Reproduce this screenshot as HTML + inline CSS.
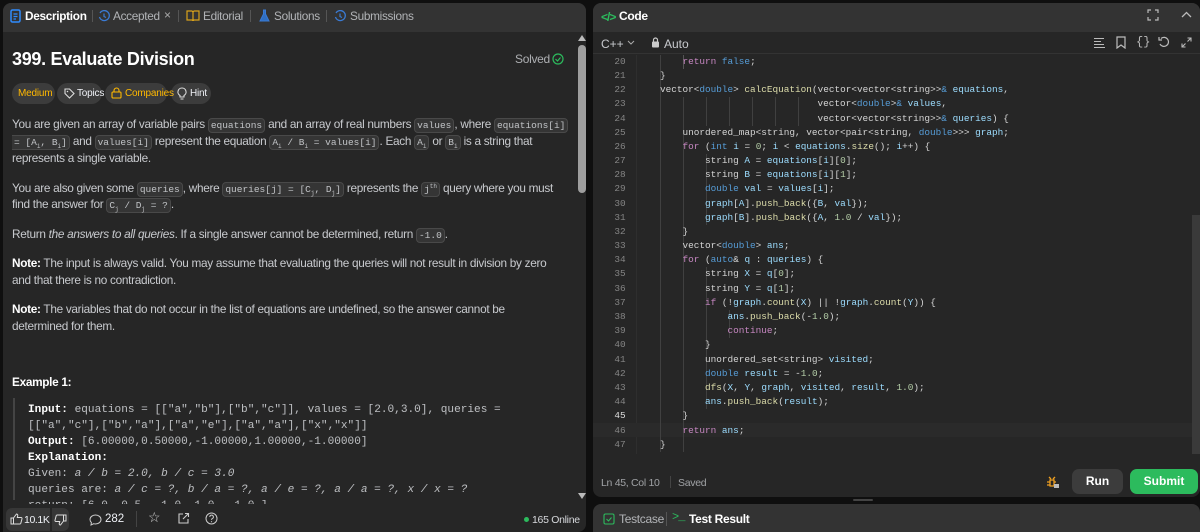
<!DOCTYPE html>
<html style="width:1200px;height:532px;overflow:hidden"><head><meta charset="utf-8">
<style>
*{margin:0;padding:0;box-sizing:border-box}
body{width:1200px;height:532px;background:#0f0f0f;font-family:"Liberation Sans",sans-serif;color:#eff1f6;overflow:hidden;position:relative}
.abs{position:absolute;white-space:nowrap}
.panel{position:absolute;background:#262626;border-radius:8px;overflow:hidden}
.hdr{position:absolute;left:0;right:0;top:0;height:29px;background:#333}
.t{font-size:11.8px;color:#eff1f6cc;letter-spacing:-0.3px}
.t b{color:#fff}
code{font-family:"Liberation Mono",monospace;font-size:9.5px;letter-spacing:0;background:#ffffff12;border:1px solid #ffffff1a;border-radius:4px;padding:1px 2px;color:#eff1f6bf}
.pre{font-family:"Liberation Mono",monospace;font-size:11.1px;color:#eff1f6bf}
.pre b{color:#fff}
.cl{position:absolute;left:0;font-family:"Liberation Mono",monospace;font-size:9.4px;color:#d4d4d4;white-space:pre;height:14px;line-height:14px}
.ln{position:absolute;left:598px;width:44px;text-align:center;font-family:"Liberation Mono",monospace;font-size:9.4px;color:#858585;height:14px;line-height:14px}
.k{color:#569cd6}.p{color:#c586c0}.v{color:#9cdcfe}.n{color:#b5cea8}.f{color:#dcdcaa}
.pill{position:absolute;top:83px;height:21px;border-radius:11px;background:#ffffff1a;font-size:10px;line-height:21px;letter-spacing:-0.2px;white-space:nowrap}
.g{position:absolute;width:1px;background:#404040}
.tab{position:absolute;top:9px;font-size:11.8px;letter-spacing:-0.3px;color:#eff1f6aa;white-space:nowrap}
</style></head><body>

<div class="panel" style="left:3px;top:3px;width:583px;height:529px">
 <div class="hdr"></div>
</div>
<svg class="abs" style="left:10px;top:9px" width="12" height="14" viewBox="0 0 12 14"><rect x="1" y="1" width="9" height="12" rx="1.5" fill="none" stroke="#2f8cff" stroke-width="1.5"/><path d="M3.5 5h4M3.5 7.5h4M3.5 10h2.5" stroke="#2f8cff" stroke-width="1.2"/></svg>
<div class="tab" style="left:25px;font-weight:bold;color:#fff">Description</div>
<div class="abs" style="left:92px;top:10px;width:1px;height:12px;background:#555"></div>
<svg class="abs" style="left:85px;top:10px;display:none" width="1" height="1"></svg>
<svg class="abs" style="left:98px;top:10px" width="12" height="12" viewBox="0 0 12 12"><path d="M2 3A5 5 0 1 1 1.5 7" fill="none" stroke="#3a7bd5" stroke-width="1.3"/><path d="M6 3.5v3l2 1" stroke="#3a7bd5" stroke-width="1.2" fill="none"/></svg>
<div class="tab" style="left:113px">Accepted</div>
<div class="abs" style="left:164px;top:8px;font-size:12px;color:#aaa">×</div>
<div class="abs" style="left:178px;top:10px;width:1px;height:12px;background:#555"></div>
<svg class="abs" style="left:186px;top:10px" width="14" height="11" viewBox="0 0 14 11"><path d="M1 1h5l1 1 1-1h5v9H8l-1 1-1-1H1z M7 2v8" fill="none" stroke="#d9a21b" stroke-width="1.2"/></svg>
<div class="tab" style="left:203px">Editorial</div>
<div class="abs" style="left:250px;top:10px;width:1px;height:12px;background:#555"></div>
<svg class="abs" style="left:259px;top:9px" width="11" height="13" viewBox="0 0 11 13"><path d="M4 1h3M4.5 1v4L1 12h9L6.5 5V1" fill="#2f6fc4" stroke="#3a7bd5" stroke-width="1"/></svg>
<div class="tab" style="left:274px">Solutions</div>
<div class="abs" style="left:326px;top:10px;width:1px;height:12px;background:#555"></div>
<svg class="abs" style="left:334px;top:10px" width="12" height="12" viewBox="0 0 12 12"><path d="M2 3A5 5 0 1 1 1.5 7" fill="none" stroke="#3a7bd5" stroke-width="1.3"/><path d="M6 3.5v3l2 1" stroke="#3a7bd5" stroke-width="1.2" fill="none"/></svg>
<div class="tab" style="left:350px">Submissions</div>

<div class="abs" style="left:12px;top:49px;font-size:18px;font-weight:bold;color:#fff;letter-spacing:-0.3px">399. Evaluate Division</div>
<div class="abs" style="left:515px;top:52px;font-size:12px;letter-spacing:-0.3px;color:#eff1f6aa">Solved</div>
<svg class="abs" style="left:552px;top:53px" width="12" height="12" viewBox="0 0 12 12"><circle cx="6" cy="6" r="5" fill="none" stroke="#2cbb5d" stroke-width="1.2"/><path d="M3.5 6l2 2 3-3.5" fill="none" stroke="#2cbb5d" stroke-width="1.2"/></svg>

<div class="pill" style="left:12px;width:43px;padding-left:6px;color:#ffb800">Medium</div>
<div class="pill" style="left:57px;width:45px;padding-left:20px;color:#eff1f6">Topics</div>
<svg class="abs" style="left:64px;top:88px" width="11" height="11" viewBox="0 0 11 11"><path d="M1 1h4.5l4.5 4.5-4.5 4.5L1 5.5z" fill="none" stroke="#ddd" stroke-width="1.1"/><circle cx="3.5" cy="3.5" r=".8" fill="#ddd"/></svg>
<div class="pill" style="left:105px;width:62px;padding-left:20px;color:#ffb800">Companies</div>
<svg class="abs" style="left:111px;top:87px" width="11" height="12" viewBox="0 0 11 12"><rect x="1" y="5" width="9" height="6" rx="1" fill="none" stroke="#ffb800" stroke-width="1.1"/><path d="M3 5V3.5a2.5 2.5 0 0 1 5 0V5" fill="none" stroke="#ffb800" stroke-width="1.1"/></svg>
<div class="pill" style="left:171px;width:40px;padding-left:19px">Hint</div>
<svg class="abs" style="left:177px;top:87px" width="10" height="13" viewBox="0 0 10 13"><path d="M5 1a4 4 0 0 0-2 7.5V10h4V8.5A4 4 0 0 0 5 1zM3.5 12h3" fill="none" stroke="#ddd" stroke-width="1.1"/></svg>

<div class="abs t" style="left:12px;top:117px">You are given an array of variable pairs <code>equations</code> and an array of real numbers <code>values</code>, where <code>equations[i]</code></div>
<div class="abs t" style="left:12px;top:134px"><code style="border-left:none;border-radius:0 4px 4px 0">= [A<sub style="font-size:6px">i</sub>, B<sub style="font-size:6px">i</sub>]</code> and <code>values[i]</code> represent the equation <code>A<sub style="font-size:6px">i</sub> / B<sub style="font-size:6px">i</sub> = values[i]</code>. Each <code>A<sub style="font-size:6px">i</sub></code> or <code>B<sub style="font-size:6px">i</sub></code> is a string that</div>
<div class="abs t" style="left:12px;top:151px">represents a single variable.</div>

<div class="abs t" style="left:12px;top:181px">You are also given some <code>queries</code>, where <code>queries[j] = [C<sub style="font-size:6px">j</sub>, D<sub style="font-size:6px">j</sub>]</code> represents the <code>j<sup style="font-size:6px">th</sup></code> query where you must</div>
<div class="abs t" style="left:12px;top:197px">find the answer for <code>C<sub style="font-size:6px">j</sub> / D<sub style="font-size:6px">j</sub> = ?</code>.</div>

<div class="abs t" style="left:12px;top:227px">Return <i>the answers to all queries</i>. If a single answer cannot be determined, return <code>-1.0</code>.</div>

<div class="abs t" style="left:12px;top:256px"><b>Note:</b> The input is always valid. You may assume that evaluating the queries will not result in division by zero</div>
<div class="abs t" style="left:12px;top:273px">and that there is no contradiction.</div>

<div class="abs t" style="left:12px;top:302px"><b>Note:</b> The variables that do not occur in the list of equations are undefined, so the answer cannot be</div>
<div class="abs t" style="left:12px;top:319px">determined for them.</div>

<div class="abs t" style="left:12px;top:375px"><b>Example 1:</b></div>
<div class="abs" style="left:13px;top:398px;width:2px;height:102px;background:#ffffff24"></div>
<div class="abs pre" style="left:28px;top:404px"><b>Input:</b> equations = [["a","b"],["b","c"]], values = [2.0,3.0], queries =</div>
<div class="abs pre" style="left:28px;top:420px">[["a","c"],["b","a"],["a","e"],["a","a"],["x","x"]]</div>
<div class="abs pre" style="left:28px;top:436px"><b>Output:</b> [6.00000,0.50000,-1.00000,1.00000,-1.00000]</div>
<div class="abs pre" style="left:28px;top:452px"><b>Explanation:</b></div>
<div class="abs pre" style="left:28px;top:468px">Given: <i>a / b = 2.0, b / c = 3.0</i></div>
<div class="abs pre" style="left:28px;top:484px">queries are: <i>a / c = ?, b / a = ?, a / e = ?, a / a = ?, x / x = ?</i></div>
<div class="abs pre" style="left:28px;top:500px;height:4px;overflow:hidden">return: [6.0, 0.5, -1.0, 1.0, -1.0 ]</div>

<div class="abs" style="left:578px;top:35px;width:0;height:0;border-left:4px solid transparent;border-right:4px solid transparent;border-bottom:6px solid #bbb"></div>
<div class="abs" style="left:578px;top:45px;width:8px;height:148px;background:#9e9e9e;border-radius:4px"></div>
<div class="abs" style="left:578px;top:493px;width:0;height:0;border-left:4px solid transparent;border-right:4px solid transparent;border-top:6px solid #bbb"></div>

<div class="abs" style="left:3px;top:504px;width:575px;height:28px;background:#262626"></div>
<div class="abs" style="left:6px;top:508px;width:63px;height:23px;background:#ffffff14;border-radius:6px"></div>
<div class="abs" style="left:50px;top:508px;width:2px;height:23px;background:#262626"></div>
<svg class="abs" style="left:10px;top:513px" width="13" height="12" viewBox="0 0 13 12"><path d="M1 5h2.5v6H1zM3.5 5l3-4c1 0 1.5.8 1.2 2L7.3 4.5H11c.8 0 1.2.6 1 1.3l-1.2 4.5c-.2.5-.6.7-1 .7H3.5" fill="none" stroke="#ddd" stroke-width="1"/></svg>
<div class="abs" style="left:24px;top:514px;font-size:10.5px;letter-spacing:-0.4px;color:#eff1f6">10.1K</div>
<svg class="abs" style="left:54px;top:514px" width="13" height="12" viewBox="0 0 13 12"><g transform="rotate(180 6.5 6)"><path d="M1 5h2.5v6H1zM3.5 5l3-4c1 0 1.5.8 1.2 2L7.3 4.5H11c.8 0 1.2.6 1 1.3l-1.2 4.5c-.2.5-.6.7-1 .7H3.5" fill="none" stroke="#ddd" stroke-width="1"/></g></svg>
<svg class="abs" style="left:89px;top:514px" width="13" height="12" viewBox="0 0 13 12"><path d="M6.5 1C3.5 1 1 3 1 5.5c0 1.2.5 2.2 1.4 3L2 11l2.8-1.3c.5.2 1.1.3 1.7.3C9.5 10 12 8 12 5.5S9.5 1 6.5 1z" fill="none" stroke="#ccc" stroke-width="1"/></svg>
<div class="abs" style="left:105px;top:513px;font-size:11.5px;color:#eff1f6">282</div>
<div class="abs" style="left:136px;top:511px;width:1px;height:16px;background:#444"></div>
<div class="abs" style="left:148px;top:509px;font-size:14px;color:#ccc">☆</div>
<svg class="abs" style="left:177px;top:512px" width="13" height="13" viewBox="0 0 13 13"><path d="M6 2H2v9h9V7M8 1.5h3.5V5M11.5 1.5L6 7" fill="none" stroke="#ccc" stroke-width="1.1"/></svg>
<svg class="abs" style="left:205px;top:512px" width="13" height="13" viewBox="0 0 13 13"><circle cx="6.5" cy="6.5" r="5.5" fill="none" stroke="#ccc" stroke-width="1"/><path d="M4.8 5a1.8 1.8 0 1 1 2.5 1.6c-.6.3-.8.6-.8 1.3" fill="none" stroke="#ccc" stroke-width="1"/><circle cx="6.5" cy="9.7" r=".6" fill="#ccc"/></svg>
<div class="abs" style="left:524px;top:517px;width:5px;height:5px;border-radius:50%;background:#2cbb5d"></div>
<div class="abs" style="left:532px;top:514px;font-size:10.5px;letter-spacing:-0.3px;color:#eff1f6dd">165 Online</div>

<div class="panel" style="left:593px;top:3px;width:607px;height:494px">
 <div class="hdr"></div>
 <div class="abs" style="left:0;right:0;top:29px;height:22px;background:#262626;border-bottom:1px solid #333"></div>
</div>
<div class="abs" style="left:601px;top:10px;font-size:12px;color:#2cbb5d;font-weight:bold;letter-spacing:-1px">&lt;/&gt;</div>
<div class="abs" style="left:619px;top:9px;font-size:12px;color:#fff;font-weight:bold;letter-spacing:-0.3px">Code</div>
<svg class="abs" style="left:1147px;top:9px" width="12" height="12" viewBox="0 0 12 12"><path d="M1 4V1h3M8 1h3v3M11 8v3H8M4 11H1V8" fill="none" stroke="#bbb" stroke-width="1.2"/></svg>
<svg class="abs" style="left:1181px;top:11px" width="11" height="7" viewBox="0 0 11 7"><path d="M1 6l4.5-4.5L10 6" fill="none" stroke="#bbb" stroke-width="1.3"/></svg>

<div class="abs" style="left:601px;top:37px;font-size:12px;color:#eff1f6cc">C++</div>
<svg class="abs" style="left:627px;top:40px" width="8" height="6" viewBox="0 0 8 6"><path d="M1 1l3 3 3-3" fill="none" stroke="#aaa" stroke-width="1"/></svg>
<svg class="abs" style="left:651px;top:37px" width="9" height="11" viewBox="0 0 9 11"><rect x="1" y="4.5" width="7" height="6" rx="1" fill="#ccc"/><path d="M2.5 4.5V3a2 2 0 0 1 4 0v1.5" fill="none" stroke="#ccc" stroke-width="1.2"/></svg>
<div class="abs" style="left:664px;top:37px;font-size:12px;color:#eff1f6cc">Auto</div>
<svg class="abs" style="left:1093px;top:37px" width="13" height="12" viewBox="0 0 13 12"><path d="M1 1.5h10M1 4.5h7M1 7.5h10M1 10.5h11" stroke="#bbb" stroke-width="1.1"/></svg>
<svg class="abs" style="left:1116px;top:36px" width="10" height="13" viewBox="0 0 10 13"><path d="M1 1h8v11L5 9l-4 3z" fill="none" stroke="#bbb" stroke-width="1.2"/></svg>
<div class="abs" style="left:1136px;top:35px;font-size:12px;color:#bbb;font-family:'Liberation Mono',monospace">{}</div>
<svg class="abs" style="left:1158px;top:36px" width="12" height="12" viewBox="0 0 12 12"><path d="M3 2.5A4.5 4.5 0 1 1 2 8" fill="none" stroke="#bbb" stroke-width="1.2"/><path d="M1 1v3h3" fill="none" stroke="#bbb" stroke-width="1.2"/></svg>
<svg class="abs" style="left:1181px;top:37px" width="11" height="11" viewBox="0 0 11 11"><path d="M6.5 1H10v3.5M10 1L6.5 4.5M4.5 10H1V6.5M1 10l3.5-3.5" fill="none" stroke="#bbb" stroke-width="1.1"/></svg>

<div class="abs" style="left:636px;top:55px;width:1px;height:400px;background:#2e2e2e"></div>
<div class="abs" style="left:593px;top:423px;width:600px;height:14px;background:#2a2a2a"></div>
<div class="abs" style="left:1192px;top:215px;width:8px;height:240px;background:#3a3a3a"></div>

<div class="ln" style="top:55px">20</div><div class="ln" style="top:69px">21</div><div class="ln" style="top:83px">22</div><div class="ln" style="top:97px">23</div><div class="ln" style="top:112px">24</div><div class="ln" style="top:126px">25</div><div class="ln" style="top:140px">26</div><div class="ln" style="top:154px">27</div><div class="ln" style="top:168px">28</div><div class="ln" style="top:182px">29</div><div class="ln" style="top:197px">30</div><div class="ln" style="top:211px">31</div><div class="ln" style="top:225px">32</div><div class="ln" style="top:239px">33</div><div class="ln" style="top:253px">34</div><div class="ln" style="top:267px">35</div><div class="ln" style="top:282px">36</div><div class="ln" style="top:296px">37</div><div class="ln" style="top:310px">38</div><div class="ln" style="top:324px">39</div><div class="ln" style="top:338px">40</div><div class="ln" style="top:353px">41</div><div class="ln" style="top:367px">42</div><div class="ln" style="top:381px">43</div><div class="ln" style="top:395px">44</div><div class="ln" style="top:409px;color:#ddd">45</div><div class="ln" style="top:424px">46</div><div class="ln" style="top:438px">47</div>

<div class="g" style="left:660px;top:55px;height:397px"></div>
<div class="g" style="left:683px;top:55px;height:14px;background:#555"></div>
<div class="g" style="left:683px;top:97px;height:29px"></div>
<div class="g" style="left:706px;top:97px;height:29px"></div>
<div class="g" style="left:729px;top:97px;height:29px"></div>
<div class="g" style="left:752px;top:97px;height:29px"></div>
<div class="g" style="left:775px;top:97px;height:29px"></div>
<div class="g" style="left:798px;top:97px;height:29px"></div>
<div class="g" style="left:683px;top:126px;height:326px"></div>
<div class="g" style="left:706px;top:154px;height:71px"></div>
<div class="g" style="left:706px;top:267px;height:142px"></div>
<div class="g" style="left:729px;top:310px;height:28px"></div>

<div style="position:absolute;left:660px;top:0">
<div class="cl" style="top:55px">    <span class="p">return</span> <span class="k">false</span>;</div>
<div class="cl" style="top:69px">}</div>
<div class="cl" style="top:83px">vector&lt;<span class="k">double</span>&gt; <span class="f">calcEquation</span>(vector&lt;vector&lt;string&gt;&gt;<span class="k">&amp;</span> <span class="v">equations</span>,</div>
<div class="cl" style="top:97px">                            vector&lt;<span class="k">double</span>&gt;<span class="k">&amp;</span> <span class="v">values</span>,</div>
<div class="cl" style="top:112px">                            vector&lt;vector&lt;string&gt;&gt;<span class="k">&amp;</span> <span class="v">queries</span>) {</div>
<div class="cl" style="top:126px">    unordered_map&lt;string, vector&lt;pair&lt;string, <span class="k">double</span>&gt;&gt;&gt; <span class="v">graph</span>;</div>
<div class="cl" style="top:140px">    <span class="p">for</span> (<span class="k">int</span> <span class="v">i</span> = <span class="n">0</span>; <span class="v">i</span> &lt; <span class="v">equations</span>.<span class="f">size</span>(); <span class="v">i</span>++) {</div>
<div class="cl" style="top:154px">        string <span class="v">A</span> = <span class="v">equations</span>[<span class="v">i</span>][<span class="n">0</span>];</div>
<div class="cl" style="top:168px">        string <span class="v">B</span> = <span class="v">equations</span>[<span class="v">i</span>][<span class="n">1</span>];</div>
<div class="cl" style="top:182px">        <span class="k">double</span> <span class="v">val</span> = <span class="v">values</span>[<span class="v">i</span>];</div>
<div class="cl" style="top:197px">        <span class="v">graph</span>[<span class="v">A</span>].<span class="f">push_back</span>({<span class="v">B</span>, <span class="v">val</span>});</div>
<div class="cl" style="top:211px">        <span class="v">graph</span>[<span class="v">B</span>].<span class="f">push_back</span>({<span class="v">A</span>, <span class="n">1.0</span> / <span class="v">val</span>});</div>
<div class="cl" style="top:225px">    }</div>
<div class="cl" style="top:239px">    vector&lt;<span class="k">double</span>&gt; <span class="v">ans</span>;</div>
<div class="cl" style="top:253px">    <span class="p">for</span> (<span class="k">auto</span>&amp; <span class="v">q</span> : <span class="v">queries</span>) {</div>
<div class="cl" style="top:267px">        string <span class="v">X</span> = <span class="v">q</span>[<span class="n">0</span>];</div>
<div class="cl" style="top:282px">        string <span class="v">Y</span> = <span class="v">q</span>[<span class="n">1</span>];</div>
<div class="cl" style="top:296px">        <span class="p">if</span> (!<span class="v">graph</span>.<span class="f">count</span>(<span class="v">X</span>) || !<span class="v">graph</span>.<span class="f">count</span>(<span class="v">Y</span>)) {</div>
<div class="cl" style="top:310px">            <span class="v">ans</span>.<span class="f">push_back</span>(-<span class="n">1.0</span>);</div>
<div class="cl" style="top:324px">            <span class="p">continue</span>;</div>
<div class="cl" style="top:338px">        }</div>
<div class="cl" style="top:353px">        unordered_set&lt;string&gt; <span class="v">visited</span>;</div>
<div class="cl" style="top:367px">        <span class="k">double</span> <span class="v">result</span> = -<span class="n">1.0</span>;</div>
<div class="cl" style="top:381px">        <span class="f">dfs</span>(<span class="v">X</span>, <span class="v">Y</span>, <span class="v">graph</span>, <span class="v">visited</span>, <span class="v">result</span>, <span class="n">1.0</span>);</div>
<div class="cl" style="top:395px">        <span class="v">ans</span>.<span class="f">push_back</span>(<span class="v">result</span>);</div>
<div class="cl" style="top:409px">    }</div>
<div class="cl" style="top:424px">    <span class="p">return</span> <span class="v">ans</span>;</div>
<div class="cl" style="top:438px">}</div>
</div>
<div class="abs" style="left:593px;top:454px;width:607px;height:4px;background:#262626"></div>

<div class="abs" style="left:601px;top:477px;font-size:10.5px;letter-spacing:-0.3px;color:#eff1f699">Ln 45, Col 10</div>
<div class="abs" style="left:670px;top:476px;width:1px;height:12px;background:#444"></div>
<div class="abs" style="left:678px;top:477px;font-size:10.5px;letter-spacing:-0.3px;color:#eff1f699">Saved</div>
<svg class="abs" style="left:1046px;top:474px" width="14" height="15" viewBox="0 0 14 15"><path d="M3 3l2 2M9 3L7 5M4 6h4v6H4zM1 8h3M8 8h2M1 11h3" stroke="#f0a020" stroke-width="1.3" fill="none"/><rect x="8" y="10" width="5" height="4" fill="#bbb"/></svg>
<div class="abs" style="left:1072px;top:469px;width:51px;height:25px;background:#ffffff1a;border-radius:7px;font-size:12px;font-weight:bold;color:#fff;text-align:center;line-height:25px">Run</div>
<div class="abs" style="left:1130px;top:469px;width:68px;height:25px;background:#2cbb5d;border-radius:7px;font-size:12px;font-weight:bold;color:#fff;text-align:center;line-height:25px">Submit</div>
<div class="abs" style="left:853px;top:499px;width:20px;height:2px;background:#444;border-radius:1px"></div>

<div class="abs" style="left:593px;top:504px;width:607px;height:28px;background:#333;border-radius:8px 8px 0 0"></div>
<svg class="abs" style="left:603px;top:513px" width="12" height="12" viewBox="0 0 12 12"><rect x="1" y="1" width="10" height="10" rx="1.5" fill="none" stroke="#2cbb5d" stroke-width="1.1"/><path d="M3.5 6l2 2 3-3.5" fill="none" stroke="#2cbb5d" stroke-width="1.1"/></svg>
<div class="abs" style="left:619px;top:512px;font-size:12px;letter-spacing:-0.3px;color:#eff1f6aa">Testcase</div>
<div class="abs" style="left:666px;top:512px;width:1px;height:14px;background:#555"></div>
<div class="abs" style="left:672px;top:510px;font-size:12px;color:#2cbb5d;font-family:'Liberation Mono',monospace;letter-spacing:-1px">&gt;_</div>
<div class="abs" style="left:689px;top:512px;font-size:12px;font-weight:bold;letter-spacing:-0.3px;color:#fff">Test Result</div>
</body></html>
